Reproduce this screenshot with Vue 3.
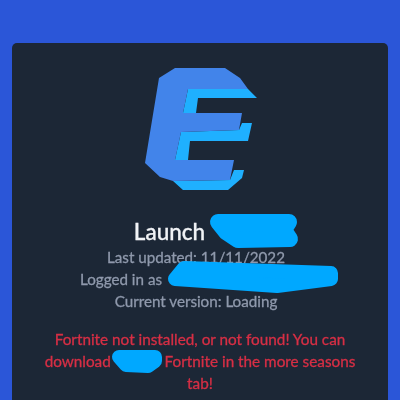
<script setup>
const lines = ['Last updated: 11/11/2022', 'Logged in as', 'Current version: Loading']
</script>

<template>
  <div class="page">
    <main class="card">
      <svg class="logo" width="112" height="122" viewBox="0 0 112 122">
        <g fill="#1fb0ff">
          <polygon points="43,21 103,21 112,30 53,30 51,45 38,45" />
          <polygon points="97,55 107,55 103,73 45,73 43,92 30,92 36,64 94,62" />
          <polygon points="89,102 99,102 97,110 83,122 38,122 28,113 85,112" />
        </g>
        <polygon fill="#4284ea" points="30,0 80,0 95,10 103,21 43,21 38,45 97,45 94,62 36,64 30,92 89,92 85,112 28,113 15,109 0,95 14,10" />
      </svg>
      <h1 class="title">Launch</h1>
      <p v-for="line in lines" :key="line" class="info">{{ line }}</p>
      <p class="error">Fortnite not installed, or not found! You can download <span class="gap"></span> Fortnite in the more seasons tab!</p>
    </main>
    <svg class="scribbles" width="400" height="400" viewBox="0 0 400 400">
      <g fill="#00a8ff" stroke="#00a8ff" stroke-linejoin="round">
        <path stroke-width="16" d="M218 222 L289 222 L284 230 L290 239 L238 240 L226 232 Z" />
        <path stroke-width="14" d="M184 268 L331 273 L331 279 L277 286 L190 280 L175 279 Z" />
        <path stroke-width="14" d="M119 357 L155 357 L155 361 L148 366 L126 365 Z" />
      </g>
    </svg>
  </div>
</template>

<style scoped>
.page {
  position: relative;
  width: 400px;
  height: 400px;
  overflow: hidden;
  background: #2b56d8;
  font-family: "Lato", "Noto Sans", sans-serif;
  display: flex;
  flex-direction: column;
  padding: 43px 12px 0;
  box-sizing: border-box;
}
.card {
  flex: 1;
  background: #1c2736;
  border-radius: 5px 5px 0 0;
  display: flex;
  flex-direction: column;
  align-items: center;
  padding-top: 25px;
  filter: blur(0.5px);
  -webkit-text-stroke: 0.3px currentColor;
}
.logo {
  display: block;
  overflow: visible;
  margin-left: 2px;
}
.title {
  margin: 28px 0 0 -61px;
  font-size: 22.5px;
  line-height: 28px;
  font-weight: 500;
  color: #f1f3f6;
}
.info {
  margin: 0;
  font-size: 15.2px;
  line-height: 22px;
  color: #8f99ac;
}
.info:nth-of-type(1) { margin-left: -8px; }
.info:nth-of-type(2) { align-self: flex-start; margin-left: 68px; }
.info:nth-of-type(3) { margin-left: -8px; }
.error {
  margin: 16px 0 0;
  width: 330px;
  font-size: 15.3px;
  line-height: 22px;
  text-align: center;
  color: #d72f45;
}
.gap {
  display: inline-block;
  width: 46px;
}
.scribbles {
  position: absolute;
  left: 0;
  top: 0;
}
</style>
